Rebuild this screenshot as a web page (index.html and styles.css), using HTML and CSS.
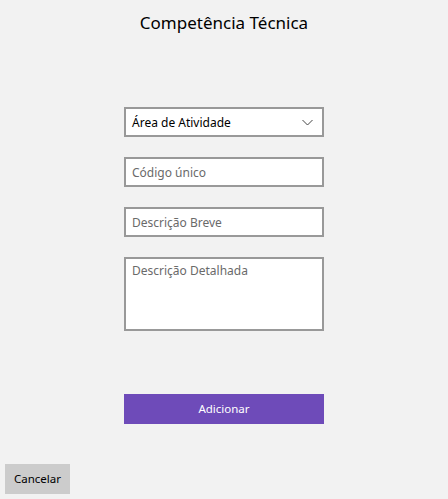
FILE: index.html
```html
<!DOCTYPE html>
<html lang="pt">
<head>
<meta charset="utf-8">
<title>Competência Técnica</title>
<link rel="stylesheet" href="styles.css">
</head>
<body>
<div class="page">
  <h1 class="title">Competência Técnica</h1>
  <form class="form">
    <div class="field combo">
      <span class="combo-text">Área de Atividade</span>
      <svg class="chevron" width="11" height="7" viewBox="0 0 11 7"><path d="M0.5 1 L5.5 6 L10.5 1" fill="none" stroke="#444" stroke-width="1"/></svg>
    </div>
    <div class="field"><span class="placeholder">Código único</span></div>
    <div class="field"><span class="placeholder">Descrição Breve</span></div>
    <div class="field area"><span class="placeholder">Descrição Detalhada</span></div>
    <button type="button" class="btn-primary">Adicionar</button>
  </form>
  <div class="footer">
    <button type="button" class="btn-secondary">Cancelar</button>
  </div>
</div>
</body>
</html>
```
FILE: styles.css
```css
* { box-sizing: border-box; }
html, body { margin: 0; padding: 0; }
body {
  background: #f2f2f2;
  font-family: "Noto Sans", "Open Sans", sans-serif;
  color: #000;
}
.page {
  height: 499px;
  display: flex;
  flex-direction: column;
}
.title {
  margin: 0;
  padding-top: 9px;
  font-size: 17px;
  line-height: 28px;
  font-weight: 400;
  text-align: center;
}
.form {
  width: 200px;
  margin: 70px auto 0;
  display: flex;
  flex-direction: column;
  gap: 20px;
}
.field {
  height: 30px;
  border: 2px solid #999;
  background: #fff;
  display: flex;
  align-items: center;
  padding: 0 8px 0 6px;
  font-size: 12px;
}
.placeholder { color: #6a6a6a; }
.combo { justify-content: space-between; padding-right: 9px; }
.combo-text { color: #000; }
.chevron { display: block; }
.area {
  height: 74px;
  align-items: flex-start;
  padding-top: 3px;
}
.btn-primary {
  margin-top: 43px;
  height: 30px;
  border: none;
  background: #6e4bb9;
  color: #fff;
  font-family: inherit;
  font-size: 11.5px;
  padding: 0 0 1px;
}
.footer {
  margin-top: auto;
  padding: 0 0 5px 5px;
}
.btn-secondary {
  width: 65px;
  height: 30px;
  border: none;
  background: #cccccc;
  color: #000;
  font-family: inherit;
  font-size: 11.5px;
  padding: 0 0 1px;
}
```
